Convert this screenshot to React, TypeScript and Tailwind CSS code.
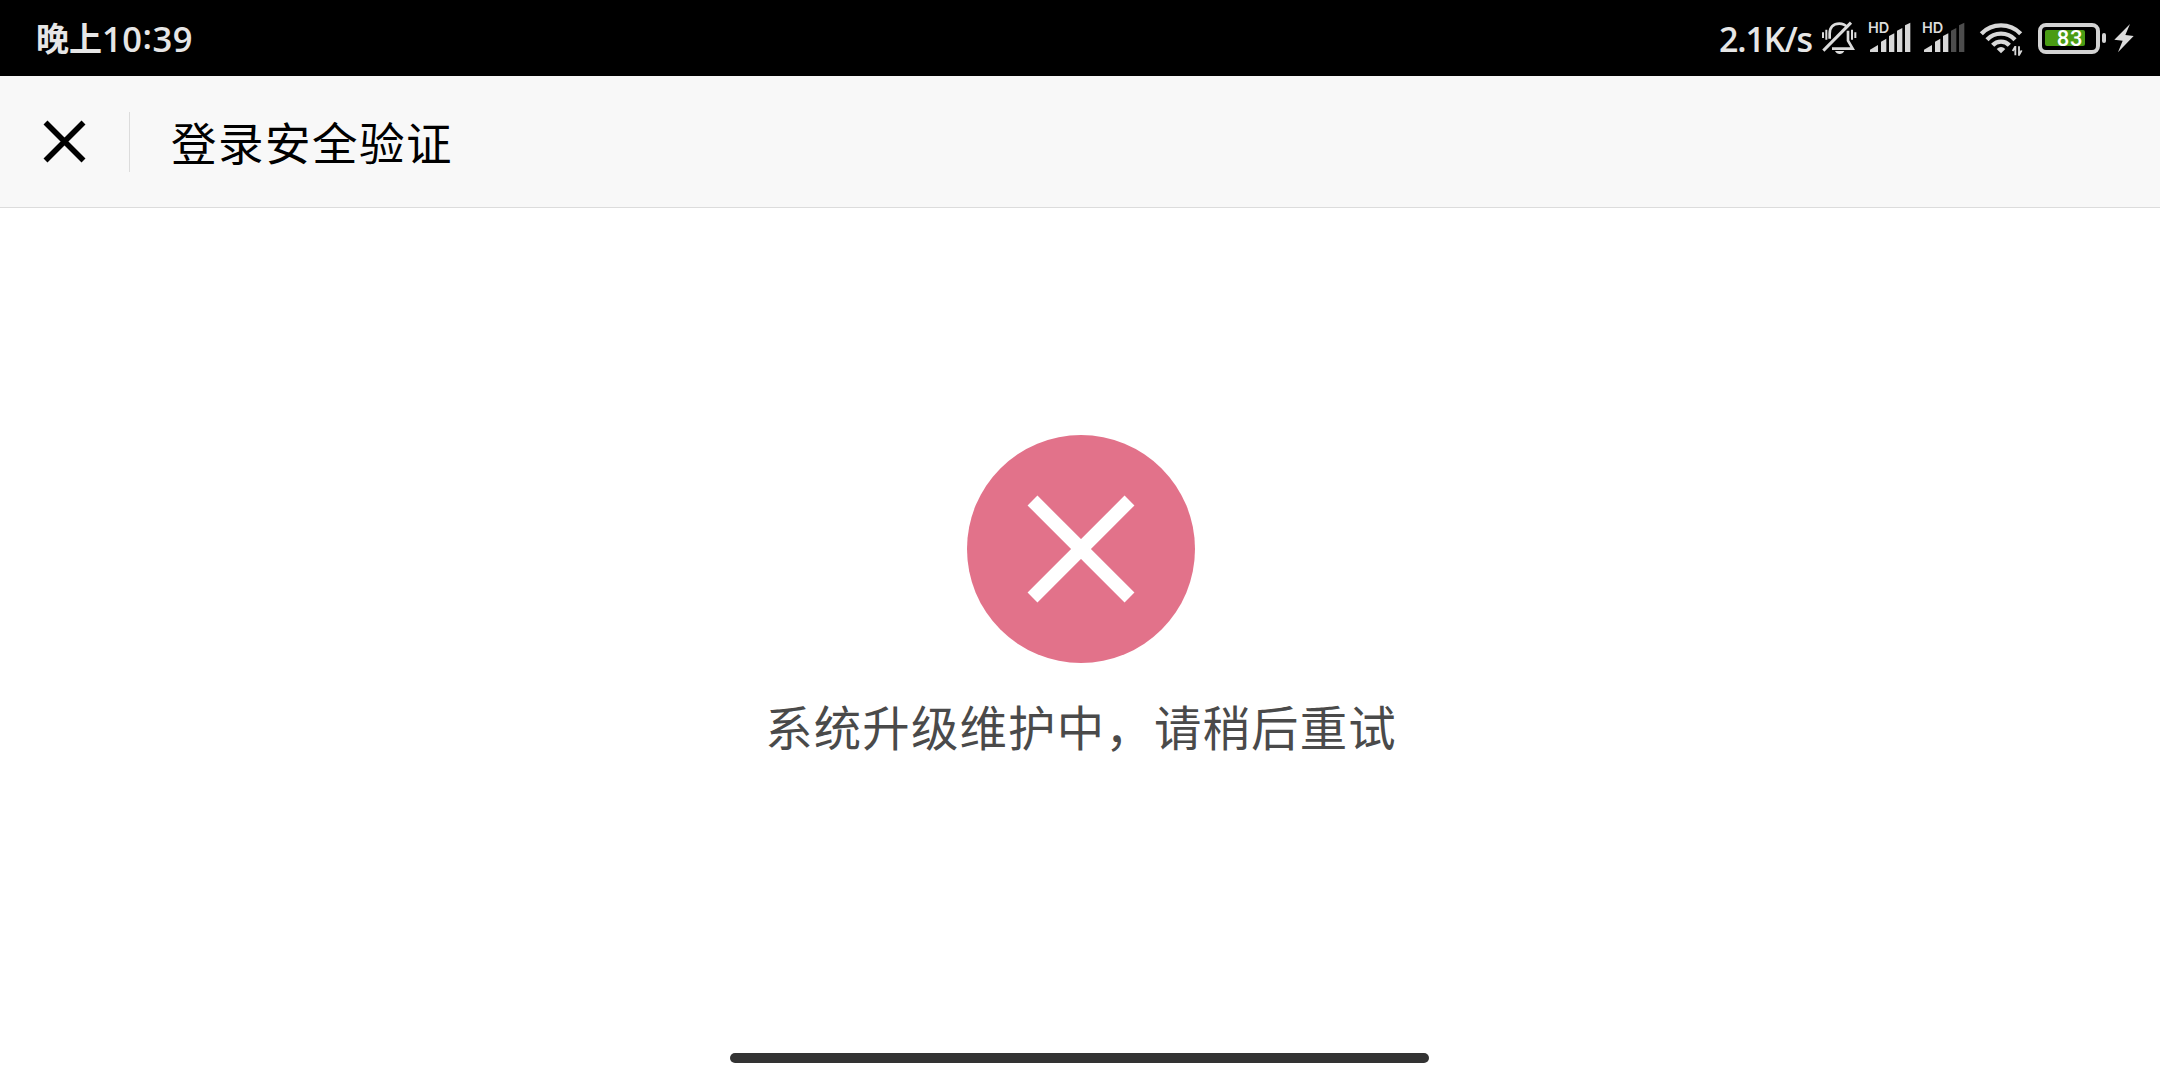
import React from 'react';

const BellOffIcon = () => (
  <svg className="h-10 w-[38px]" viewBox="360 54 114 120" fill="none" stroke="#dcdcdc" strokeWidth="8">
    <path d="M389 116V101C389 82 400 71 418 71C428 71 436 75 441 81" />
    <path d="M444 92V122L458 146H396" />
    <path d="M370 152L453 68" strokeWidth="9" />
    <path d="M405 153H433C430 159 425 162 419 162C413 162 408 159 405 153Z" fill="#dcdcdc" stroke="none" />
    <path d="M369 97V114M379 89V119M456 89V119M466 97V114" strokeWidth="6" />
  </svg>
);

interface SignalProps {
  weak?: boolean;
}

const Signal: React.FC<SignalProps> = ({ weak = false }) => {
  const lastBars = weak ? '#4d4d4d' : '#d8d8d8';
  return (
    <div className="relative h-10 w-[44px]">
      <svg className="h-10 w-[44px]" viewBox="504 54 132 120" fill="#d8d8d8">
        <path d="M510 149L534 135V156H510Z" />
        <path d="M543 125L559 116V156H543Z" />
        <path d="M567 108L583 100V156H567Z" />
        <path d="M591 92L607 84V156H591Z" fill={lastBars} />
        <path d="M615 76L631 68V156H615Z" fill={lastBars} />
      </svg>
      <span className="absolute left-0 top-[1px] font-['Inter'] text-[14.5px] font-semibold leading-[18px] text-[#dcdcdc]">
        HD
      </span>
    </div>
  );
};

const WifiIcon = () => (
  <svg className="h-10 w-[44px]" viewBox="177 54 132 120" fill="none" stroke="#d8d8d8" strokeWidth="13">
    <path d="M184 101A82 82 0 0 1 302 101" />
    <path d="M201 119A58 58 0 0 1 285 119" />
    <path d="M218 136A34 34 0 0 1 268 136" />
    <path d="M230 147Q243 135 256 147L243 160Z" fill="#d8d8d8" stroke="none" />
    <path d="M286 138V166M286 139L278 153M297 167V139M297 165L305 151" strokeWidth="5.5" />
  </svg>
);

const Battery = () => (
  <div className="flex items-center gap-[2px]">
    <div className="flex h-[31px] w-[62px] items-center rounded-[8px] border-4 border-[#d3d3d3] pl-[3px]">
      <div className="flex h-4 w-10 items-center justify-end rounded-[2px] bg-[#4a9c14] pr-[2px]">
        <span className="relative top-[1px] font-['Roboto'] text-[22px] font-medium leading-4 tracking-[0.6px] text-white">83</span>
      </div>
    </div>
    <div className="h-[10px] w-[4px] rounded-[2px] bg-[#d3d3d3]" />
  </div>
);

const BoltIcon = () => (
  <svg className="h-10 w-5" viewBox="581 54 60 120" fill="#dcdcdc">
    <path d="M629 72L582 119L607 122L593 157L640 108L615 105Z" />
  </svg>
);

const StatusBar = () => (
  <div className="flex h-[76px] items-center justify-between bg-black pl-[36px] pr-[26px] font-['Open_Sans','Noto_Sans_CJK_SC',sans-serif] font-semibold text-[#e6e6e6]">
    <div className="flex items-center">
      <span className="relative top-px text-[33px] font-bold leading-10">晚上</span>
      <span className="relative top-px text-[34.5px] leading-10 tracking-[0.5px]">
        10<span className="relative -top-[3px]">:</span>39
      </span>
    </div>
    <div className="flex items-center">
      <span className="relative top-px text-[34px] leading-10 tracking-[-1.1px]">2.1K/s</span>
      <div className="ml-[8px] flex"><BellOffIcon /></div>
      <div className="ml-[10px] flex gap-[10px]">
        <Signal />
        <Signal weak />
      </div>
      <div className="ml-[13px] flex"><WifiIcon /></div>
      <div className="ml-[15px] flex"><Battery /></div>
      <div className="ml-[8px] flex"><BoltIcon /></div>
    </div>
  </div>
);

const Header = () => (
  <header className="flex h-[132px] items-center border-b border-[#dcdcdc] bg-[#f8f8f8]">
    <button className="mb-[2px] ml-[42px]" aria-label="关闭">
      <svg className="h-11 w-11" viewBox="0 0 44 44" stroke="#000" strokeWidth="5.6">
        <path d="M3.5 3.5L41.5 41.5M41.5 3.5L3.5 41.5" />
      </svg>
    </button>
    <div className="ml-[43px] h-[60px] w-px bg-[#dcdcdc]" />
    <h1 className="mb-[1px] ml-[41px] text-[45.5px] leading-[60px] tracking-[1.5px] text-black">登录安全验证</h1>
  </header>
);

const App: React.FC = () => {
  return (
    <div className="flex h-screen w-full flex-col overflow-hidden bg-white font-['Noto_Sans_CJK_SC',sans-serif]">
      <StatusBar />
      <Header />
      <main className="flex flex-1 flex-col items-center pl-[2px] pt-[227px]">
        <svg className="h-[228px] w-[228px]" viewBox="0 0 228 228">
          <circle cx="114" cy="114" r="114" fill="#e2728a" />
          <path d="M65.5 65.5L162.5 162.5M162.5 65.5L65.5 162.5" stroke="#fff" strokeWidth="14" />
        </svg>
        <p className="mt-[27px] text-[47.4px] leading-[72px] tracking-[1.2px] text-[#4a4a4a]">系统升级维护中，请稍后重试</p>
      </main>
      <div className="mb-[17px] ml-[730px] h-[10px] w-[699px] rounded-full bg-[#333]" />
    </div>
  );
};

export default App;
